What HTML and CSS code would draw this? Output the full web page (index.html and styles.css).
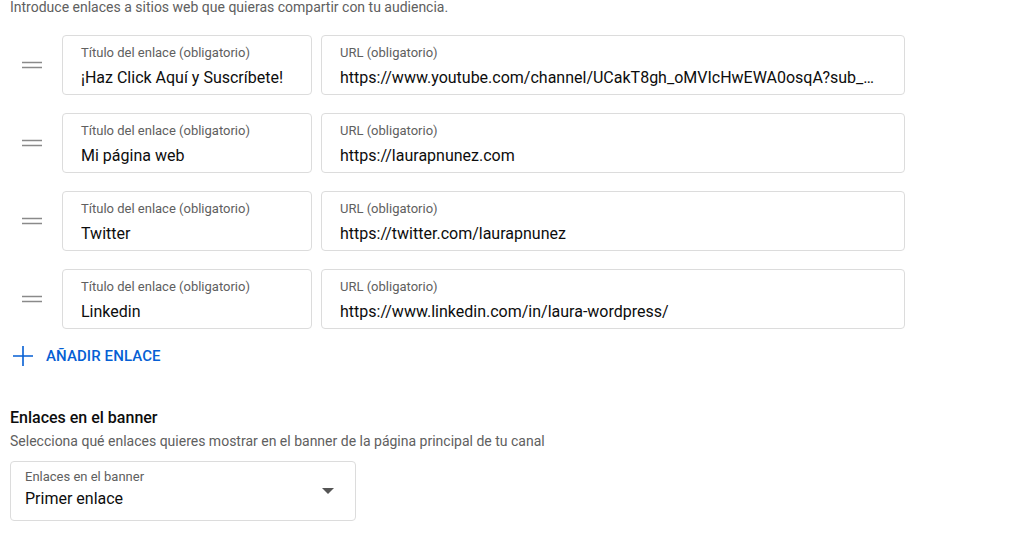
FILE: index.html
```html
<!DOCTYPE html>
<html lang="es">
<head>
<meta charset="utf-8">
<title>Enlaces</title>
<link rel="stylesheet" href="styles.css">
</head>
<body>
<main class="page">
  <p class="intro">Introduce enlaces a sitios web que quieras compartir con tu audiencia.</p>

  <ul class="links">
    <li class="link-row">
      <span class="handle"><svg width="20" height="8" viewBox="0 0 20 8"><path d="M0 1.5h20M0 6.5h20" stroke="#8a8a8a" stroke-width="1.6"/></svg></span>
      <div class="field title-field">
        <span class="field-label">Título del enlace (obligatorio)</span>
        <span class="field-value">¡Haz Click Aquí y Suscríbete!</span>
      </div>
      <div class="field url-field">
        <span class="field-label">URL (obligatorio)</span>
        <span class="field-value">https://www.youtube.com/channel/UCakT8gh_oMVIcHwEWA0osqA?sub_…</span>
      </div>
    </li>
    <li class="link-row">
      <span class="handle"><svg width="20" height="8" viewBox="0 0 20 8"><path d="M0 1.5h20M0 6.5h20" stroke="#8a8a8a" stroke-width="1.6"/></svg></span>
      <div class="field title-field">
        <span class="field-label">Título del enlace (obligatorio)</span>
        <span class="field-value">Mi página web</span>
      </div>
      <div class="field url-field">
        <span class="field-label">URL (obligatorio)</span>
        <span class="field-value">https://laurapnunez.com</span>
      </div>
    </li>
    <li class="link-row">
      <span class="handle"><svg width="20" height="8" viewBox="0 0 20 8"><path d="M0 1.5h20M0 6.5h20" stroke="#8a8a8a" stroke-width="1.6"/></svg></span>
      <div class="field title-field">
        <span class="field-label">Título del enlace (obligatorio)</span>
        <span class="field-value">Twitter</span>
      </div>
      <div class="field url-field">
        <span class="field-label">URL (obligatorio)</span>
        <span class="field-value">https://twitter.com/laurapnunez</span>
      </div>
    </li>
    <li class="link-row">
      <span class="handle"><svg width="20" height="8" viewBox="0 0 20 8"><path d="M0 1.5h20M0 6.5h20" stroke="#8a8a8a" stroke-width="1.6"/></svg></span>
      <div class="field title-field">
        <span class="field-label">Título del enlace (obligatorio)</span>
        <span class="field-value">Linkedin</span>
      </div>
      <div class="field url-field">
        <span class="field-label">URL (obligatorio)</span>
        <span class="field-value">https://www.linkedin.com/in/laura-wordpress/</span>
      </div>
    </li>
  </ul>

  <button class="add-link" type="button">
    <svg width="20" height="20" viewBox="0 0 20 20"><path d="M10 0v20M0 10h20" stroke="#065fd4" stroke-width="1.6"/></svg>
    <span>AÑADIR ENLACE</span>
  </button>

  <h2 class="section-title">Enlaces en el banner</h2>
  <p class="section-desc">Selecciona qué enlaces quieres mostrar en el banner de la página principal de tu canal</p>

  <div class="field select-field">
    <div class="select-text">
      <span class="field-label">Enlaces en el banner</span>
      <span class="field-value">Primer enlace</span>
    </div>
    <svg class="caret" width="12" height="6" viewBox="0 0 12 6"><path d="M0 0h12L6 6z" fill="#555"/></svg>
  </div>
</main>
</body>
</html>
```

FILE: styles.css
```css
* { box-sizing: border-box; }

html, body {
  margin: 0;
  background: #fff;
}

body {
  font-family: Roboto, "Noto Sans", Arial, sans-serif;
  color: #0d0d0d;
}

.page {
  padding: 0 0 0 10px;
}

.intro {
  margin: -2px 0 0;
  font-size: 14px;
  line-height: 18px;
  color: #606060;
}

.links {
  list-style: none;
  margin: 19px 0 0;
  padding: 0;
  display: flex;
  flex-direction: column;
  gap: 18px;
}

.link-row {
  display: flex;
  align-items: center;
  gap: 9px;
}

.handle {
  width: 43px;
  display: flex;
  padding-left: 12px;
}

.handle svg { display: block; }

.field {
  height: 60px;
  border: 1px solid #dcdcdc;
  border-radius: 4px;
  padding: 9px 18px 0;
  display: flex;
  flex-direction: column;
  min-width: 0;
}

.title-field { width: 250px; }
.url-field { width: 584px; }

.field-label {
  font-size: 13px;
  line-height: 16px;
  color: #606060;
}

.field-value {
  margin-top: 7px;
  font-size: 16px;
  line-height: 20px;
  color: #0d0d0d;
  white-space: nowrap;
  overflow: hidden;
}

.add-link {
  margin: 17px 0 0;
  padding: 0 0 0 3px;
  border: 0;
  background: none;
  display: flex;
  align-items: center;
  gap: 13px;
  font-family: inherit;
  font-size: 15px;
  font-weight: 500;
  color: #065fd4;
  letter-spacing: 0.1px;
  cursor: pointer;
}

.add-link svg { display: block; }

.section-title {
  margin: 41px 0 0;
  font-size: 16px;
  line-height: 22px;
  font-weight: 500;
  color: #0d0d0d;
}

.section-desc {
  margin: 3px 0 0;
  font-size: 14px;
  line-height: 18px;
  color: #606060;
}

.select-field {
  margin-top: 11px;
  width: 346px;
  flex-direction: row;
  align-items: flex-start;
  padding: 7px 21px 0 14px;
  justify-content: space-between;
}

.select-text {
  display: flex;
  flex-direction: column;
}

.select-text .field-value { margin-top: 4px; }

.caret {
  display: block;
  align-self: center;
  margin-top: -7px;
}
```
